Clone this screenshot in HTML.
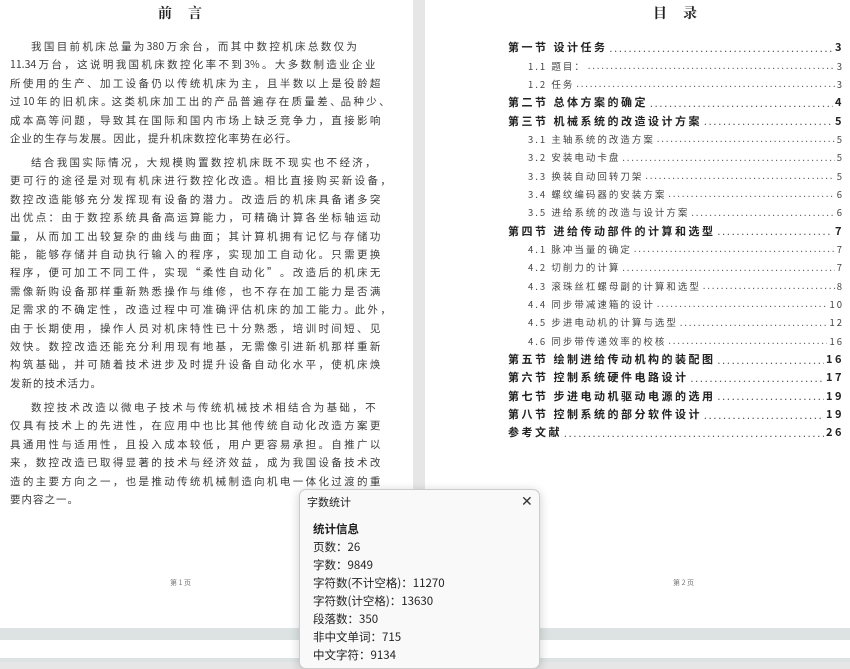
<!DOCTYPE html>
<html><head><meta charset="utf-8"><style>
*{margin:0;padding:0;box-sizing:border-box}
body{width:850px;height:662px;overflow:hidden;background:#e6e6e6;position:relative;font-family:"Liberation Serif","Noto Serif CJK SC",serif;color:#222}
.page{position:absolute;top:0;height:628px;background:#fff}
#p1{left:0;width:413px}
#p2{left:425px;width:425px}
.h{position:absolute;top:3px;font-size:14px;font-weight:bold;letter-spacing:16px;font-family:"Noto Serif CJK SC",serif}
.t{position:absolute;left:10px;width:337px;font-size:10.5px;line-height:18.4px;font-family:"Noto Sans CJK SC",sans-serif;color:#3a3a3a}
.t div{text-align:justify;text-align-last:justify;height:18.4px;white-space:nowrap;overflow:visible}
.t div.l{text-align-last:left;letter-spacing:1px}
.toc{position:absolute;left:83px;top:38px;width:336px;font-family:"Noto Sans CJK SC",sans-serif}
.e{display:flex;height:18.35px;align-items:center;white-space:nowrap;overflow:hidden}
.e .n{flex:1;overflow:hidden;margin:0 2px;letter-spacing:2px;color:#555}
.e .n::before{content:"......................................................................................................................................................"}
.m{font-size:11px;font-weight:bold;color:#222;letter-spacing:2.5px}
.m .n{font-size:10px;font-weight:normal}
.s{font-size:9.5px;color:#444;padding-left:20px;letter-spacing:2px}
.s .n{font-size:9px}
.ft{position:absolute;top:578px;font-size:7px;color:#777;font-family:"Noto Sans CJK SC",sans-serif}
.band{position:absolute;left:0;top:628px;width:850px;height:12px;background:#dde3e3}
.band2{position:absolute;left:0;top:640px;width:850px;height:18px;background:#fff}
.band3{position:absolute;left:0;top:658px;width:850px;height:4px;background:#dde3e3}
.dlg{position:absolute;left:299px;top:489px;width:241px;height:180px;background:#f9f9f9;border:1px solid #ccc;border-radius:7px;box-shadow:0 2px 10px rgba(0,0,0,.2);font-family:"Noto Sans CJK SC",sans-serif;color:#222}
.dlg .tt{position:absolute;left:7px;top:4px;font-size:11px}
.dlg .x{position:absolute;left:221px;top:1px;font-size:14px;color:#333}
.dlg .c{position:absolute;left:13px;top:30px;font-size:11.5px;line-height:18px}
</style></head><body>
<div class="page" id="p1">
<div class="h" style="left:158px">前言</div>
<div class="t" style="top:38px">
<div>&emsp;&emsp;我 国 目 前 机 床 总 量 为 380 万 余 台 ， 而 其 中 数 控 机 床 总 数 仅 为</div>
<div>11.34 万 台 ， 这 说 明 我 国 机 床 数 控 化 率 不 到 3% 。 大 多 数 制 造 业 企 业</div>
<div>所 使 用 的 生 产 、 加 工 设 备 仍 以 传 统 机 床 为 主 ， 且 半 数 以 上 是 役 龄 超</div>
<div>过 10 年 的 旧 机 床 。这 类 机 床 加 工 出 的 产 品 普 遍 存 在 质 量 差 、品 种 少 、</div>
<div>成 本 高 等 问 题 ， 导 致 其 在 国 际 和 国 内 市 场 上 缺 乏 竞 争 力 ， 直 接 影 响</div>
<div class="l">企业的生存与发展。因此，提升机床数控化率势在必行。</div>
</div>
<div class="t" style="top:154px">
<div>&emsp;&emsp;结 合 我 国 实 际 情 况 ， 大 规 模 购 置 数 控 机 床 既 不 现 实 也 不 经 济 ，</div>
<div>更 可 行 的 途 径 是 对 现 有 机 床 进 行 数 控 化 改 造 。相 比 直 接 购 买 新 设 备 ，</div>
<div>数 控 改 造 能 够 充 分 发 挥 现 有 设 备 的 潜 力 。 改 造 后 的 机 床 具 备 诸 多 突</div>
<div>出 优 点 ： 由 于 数 控 系 统 具 备 高 运 算 能 力 ， 可 精 确 计 算 各 坐 标 轴 运 动</div>
<div>量 ， 从 而 加 工 出 较 复 杂 的 曲 线 与 曲 面 ； 其 计 算 机 拥 有 记 忆 与 存 储 功</div>
<div>能 ， 能 够 存 储 并 自 动 执 行 输 入 的 程 序 ， 实 现 加 工 自 动 化 。 只 需 更 换</div>
<div>程 序 ， 便 可 加 工 不 同 工 件 ， 实 现 “ 柔 性 自 动 化 ” 。 改 造 后 的 机 床 无</div>
<div>需 像 新 购 设 备 那 样 重 新 熟 悉 操 作 与 维 修 ， 也 不 存 在 加 工 能 力 是 否 满</div>
<div>足 需 求 的 不 确 定 性 ， 改 造 过 程 中 可 准 确 评 估 机 床 的 加 工 能 力 。此 外 ，</div>
<div>由 于 长 期 使 用 ， 操 作 人 员 对 机 床 特 性 已 十 分 熟 悉 ， 培 训 时 间 短 、 见</div>
<div>效 快 。 数 控 改 造 还 能 充 分 利 用 现 有 地 基 ， 无 需 像 引 进 新 机 那 样 重 新</div>
<div>构 筑 基 础 ， 并 可 随 着 技 术 进 步 及 时 提 升 设 备 自 动 化 水 平 ， 使 机 床 焕</div>
<div class="l">发新的技术活力。</div>
</div>
<div class="t" style="top:399px">
<div>&emsp;&emsp;数 控 技 术 改 造 以 微 电 子 技 术 与 传 统 机 械 技 术 相 结 合 为 基 础 ， 不</div>
<div>仅 具 有 技 术 上 的 先 进 性 ， 在 应 用 中 也 比 其 他 传 统 自 动 化 改 造 方 案 更</div>
<div>具 通 用 性 与 适 用 性 ， 且 投 入 成 本 较 低 ， 用 户 更 容 易 承 担 。 自 推 广 以</div>
<div>来 ， 数 控 改 造 已 取 得 显 著 的 技 术 与 经 济 效 益 ， 成 为 我 国 设 备 技 术 改</div>
<div>造 的 主 要 方 向 之 一 ， 也 是 推 动 传 统 机 械 制 造 向 机 电 一 体 化 过 渡 的 重</div>
<div class="l">要内容之一。</div>
</div>
<div class="ft" style="left:170px">第 1 页</div>
</div>
<div class="page" id="p2">
<div class="h" style="left:228px">目录</div>
<div class="toc">
<div class="e m"><span>第一节 设计任务</span><span class="n"></span><span>3</span></div>
<div class="e s"><span>1.1 题目：</span><span class="n"></span><span>3</span></div>
<div class="e s"><span>1.2 任务</span><span class="n"></span><span>3</span></div>
<div class="e m"><span>第二节 总体方案的确定</span><span class="n"></span><span>4</span></div>
<div class="e m"><span>第三节 机械系统的改造设计方案</span><span class="n"></span><span>5</span></div>
<div class="e s"><span>3.1 主轴系统的改造方案</span><span class="n"></span><span>5</span></div>
<div class="e s"><span>3.2 安装电动卡盘</span><span class="n"></span><span>5</span></div>
<div class="e s"><span>3.3 换装自动回转刀架</span><span class="n"></span><span>5</span></div>
<div class="e s"><span>3.4 螺纹编码器的安装方案</span><span class="n"></span><span>6</span></div>
<div class="e s"><span>3.5 进给系统的改造与设计方案</span><span class="n"></span><span>6</span></div>
<div class="e m"><span>第四节 进给传动部件的计算和选型</span><span class="n"></span><span>7</span></div>
<div class="e s"><span>4.1 脉冲当量的确定</span><span class="n"></span><span>7</span></div>
<div class="e s"><span>4.2 切削力的计算</span><span class="n"></span><span>7</span></div>
<div class="e s"><span>4.3 滚珠丝杠螺母副的计算和选型</span><span class="n"></span><span>8</span></div>
<div class="e s"><span>4.4 同步带减速箱的设计</span><span class="n"></span><span>10</span></div>
<div class="e s"><span>4.5 步进电动机的计算与选型</span><span class="n"></span><span>12</span></div>
<div class="e s"><span>4.6 同步带传递效率的校核</span><span class="n"></span><span>16</span></div>
<div class="e m"><span>第五节 绘制进给传动机构的装配图</span><span class="n"></span><span>16</span></div>
<div class="e m"><span>第六节 控制系统硬件电路设计</span><span class="n"></span><span>17</span></div>
<div class="e m"><span>第七节 步进电动机驱动电源的选用</span><span class="n"></span><span>19</span></div>
<div class="e m"><span>第八节 控制系统的部分软件设计</span><span class="n"></span><span>19</span></div>
<div class="e m"><span>参考文献</span><span class="n"></span><span>26</span></div>
</div>
<div class="ft" style="left:248px">第 2 页</div>
</div>
<div class="band"></div><div class="band2"></div><div class="band3"></div>
<div class="dlg">
<div class="tt">字数统计</div>
<div class="x">✕</div>
<div class="c">
<div style="font-weight:bold">统计信息</div>
<div>页数：26</div>
<div>字数：9849</div>
<div>字符数(不计空格)：11270</div>
<div>字符数(计空格)：13630</div>
<div>段落数：350</div>
<div>非中文单词：715</div>
<div>中文字符：9134</div>
</div>
</div>
</body></html>
